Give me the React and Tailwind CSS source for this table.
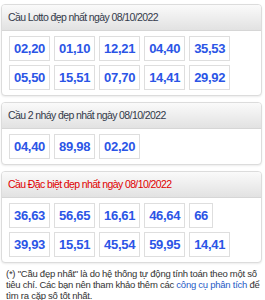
const panels = [
  {
    title: 'Cầu Lotto đẹp nhất ngày 08/10/2022',
    red: false,
    rows: [
      ['02,20', '01,10', '12,21', '04,40', '35,53'],
      ['05,50', '15,51', '07,70', '14,41', '29,92'],
    ],
  },
  {
    title: 'Cầu 2 nháy đẹp nhất ngày 08/10/2022',
    red: false,
    rows: [['04,40', '89,98', '02,20']],
  },
  {
    title: 'Cầu Đặc biệt đẹp nhất ngày 08/10/2022',
    red: true,
    rows: [
      ['36,63', '56,65', '16,61', '46,64', '66'],
      ['39,93', '15,51', '45,54', '59,95', '14,41'],
    ],
  },
]

function Panel({ title, red, rows }) {
  return (
    <div className="rounded-[4px] border border-[#dcdcdc] bg-white shadow-[0_1px_2px_rgba(0,0,0,0.08)] overflow-hidden">
      <div className="h-[26px] flex items-center pl-[6px] border-b border-[#d6d6d6] bg-gradient-to-b from-[#fafafa] to-[#e2e2e2]">
        <span className={red ? 'text-[10.5px] tracking-[-0.6px] text-[#e00000]' : 'text-[10.5px] tracking-[-0.6px] text-[#333a4a]'}>{title}</span>
      </div>
      <div className="flex flex-col gap-[4px] pt-[5px] pb-[5px] pl-[7px]">
        {rows.map((row, i) => (
          <div key={i} className="flex gap-[4px]">
            {row.map((n, j) => (
              <div
                key={j}
                className="h-[25px] flex items-center px-[4px] border border-[#dedede] text-[13px] tracking-[-0.3px] font-bold text-[#2b55e6]"
              >
                {n}
              </div>
            ))}
          </div>
        ))}
      </div>
    </div>
  )
}

export default function App() {
  return (
    <div className="w-[265px] h-[300px] bg-white pt-[4px] pl-[1px] pr-[3px]" style={{ fontFamily: '"Liberation Sans", Arial, sans-serif' }}>
      <div className="flex flex-col gap-[6px]">
        {panels.map((p, i) => (
          <Panel key={i} {...p} />
        ))}
      </div>
      <p className="mt-[5px] pl-[5px] -mr-[3px] whitespace-nowrap text-[9.5px] leading-[11px] text-[#333] tracking-[-0.25px]">
        (*) "Cầu đẹp nhất" là do hệ thống tự động tính toán theo một số
        <br />
        tiêu chí. Các bạn nên tham khảo thêm các{' '}
        <span className="text-[#1f5bc6]">công cụ phân tích</span> để
        <br />
        tìm ra cặp số tốt nhất.
      </p>
    </div>
  )
}
